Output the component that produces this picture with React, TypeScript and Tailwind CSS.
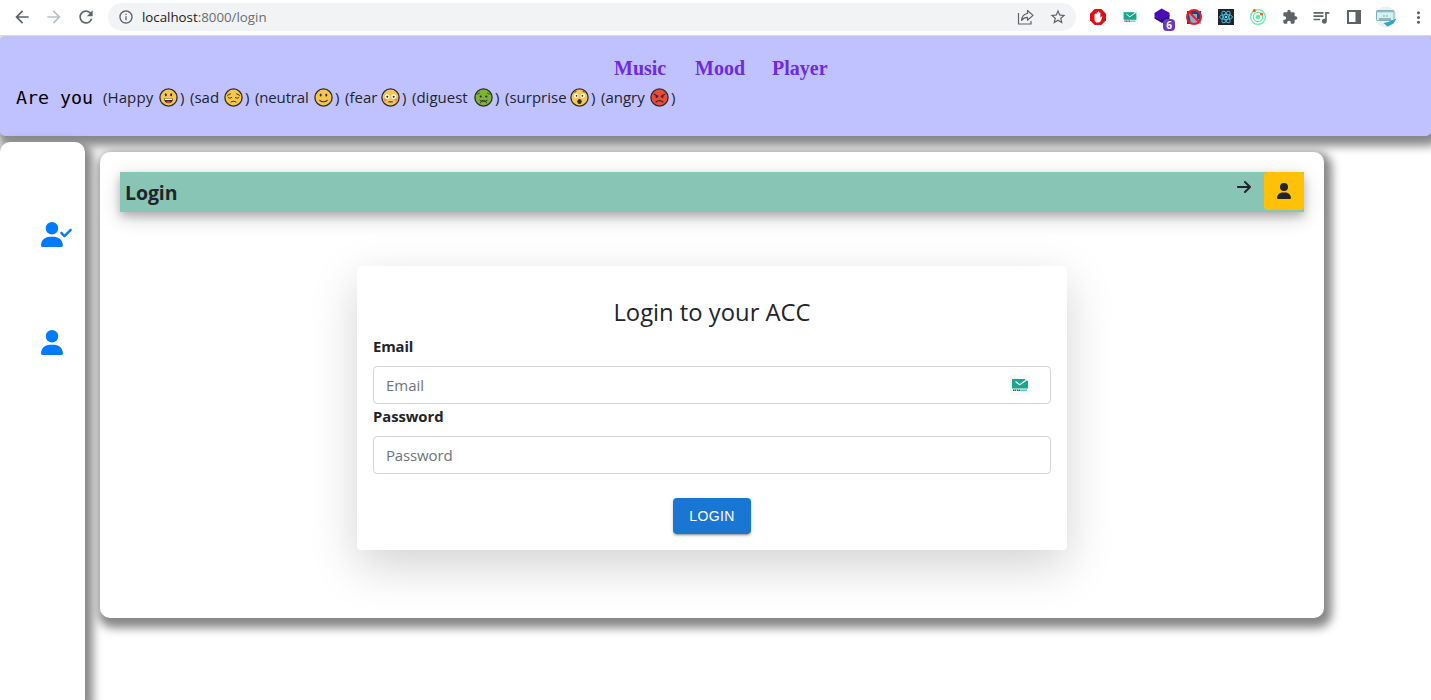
import React from "react";
import { FaArrowRight, FaUser, FaUserCheck } from "react-icons/fa6";
import {
  MdArrowBack,
  MdArrowForward,
  MdExtension,
  MdInfoOutline,
  MdMoreVert,
  MdOutlineQueueMusic,
  MdRefresh,
  MdStarBorder,
} from "react-icons/md";

type Mood = "happy" | "sad" | "neutral" | "fear" | "disgust" | "surprise" | "angry";

const fills: Record<Mood, string> = {
  happy: "#f7c548",
  sad: "#f7c548",
  neutral: "#f7c548",
  fear: "#f9c555",
  disgust: "#7db52c",
  surprise: "#f9c84f",
  angry: "#e94b35",
};

function Face({ mood }: { mood: Mood }) {
  const ink = "#2f2a2c";
  return (
    <svg viewBox="0 0 19 19" className="-ml-px mr-px h-[19px] w-[19px] shrink-0">
      <circle cx="9.5" cy="9.5" r="8.6" fill={fills[mood]} stroke={ink} strokeWidth="1.3" />
      {mood === "happy" && (
        <>
          <ellipse cx="6.8" cy="6.7" rx="1" ry="1.5" fill={ink} />
          <ellipse cx="12.2" cy="6.7" rx="1" ry="1.5" fill={ink} />
          <path d="M5 10.5h9c0 3-2 4.8-4.5 4.8S5 13.500 5 10.500z" fill={ink} />
          <path d="M5.700 10.700h7.600v1.300H5.700z" fill="#fff" />
          <ellipse cx="9.500" cy="14" rx="2.300" ry="1" fill="#e8403a" />
        </>
      )}
      {mood === "sad" && (
        <g fill="none" stroke={ink} strokeWidth=".9" strokeLinecap="round">
          <path d="M3.500 7.300 6.500 5.800M15.500 7.300 12.500 5.800M4 9.300c1 1.200 2.700 1.200 3.700.2M15 9.300c-1 1.200-2.700 1.200-3.700.2M7 14c1.500-1 3.500-1 5 0" />
        </g>
      )}
      {mood === "neutral" && (
        <>
          <ellipse cx="6.700" cy="7" rx="1" ry="1.500" fill={ink} />
          <ellipse cx="12.300" cy="7" rx="1" ry="1.500" fill={ink} />
          <path d="M5.800 12.300c2 2 5.400 2 7.400 0" fill="none" stroke={ink} strokeWidth="1.100" strokeLinecap="round" />
        </>
      )}
      {mood === "fear" && (
        <>
          <circle cx="3.900" cy="11.800" r="1.600" fill="#f58b5a" />
          <circle cx="15.100" cy="11.800" r="1.600" fill="#f58b5a" />
          <circle cx="6.200" cy="8.700" r="2.400" fill="#fff" />
          <circle cx="12.800" cy="8.700" r="2.400" fill="#fff" />
          <circle cx="6.300" cy="8.800" r="1" fill={ink} />
          <circle cx="12.700" cy="8.800" r="1" fill={ink} />
          <path d="M7.600 13.900h3.800" stroke={ink} strokeWidth="1" strokeLinecap="round" />
        </>
      )}
      {mood === "disgust" && (
        <>
          <path d="M2.500 6.500 6 5M16.500 6.500 13 5" stroke="#3d7a1c" strokeWidth="1.300" />
          <circle cx="6.700" cy="8.500" r="1.100" fill={ink} />
          <circle cx="12.300" cy="8.500" r="1.100" fill={ink} />
          <path d="M6.500 15.200c.3-2 1.500-2.700 3-2.700s2.700.7 3 2.700M5.500 12l2.200 1.200h3.600l2.200-1.200" fill="none" stroke={ink} strokeWidth=".9" />
        </>
      )}
      {mood === "surprise" && (
        <>
          <path d="M4.500 4.300 6.500 3.300M14.500 4.300l-2-1" stroke={ink} strokeWidth=".8" />
          <circle cx="6.300" cy="7.700" r="2.200" fill="#fff" />
          <circle cx="12.700" cy="7.700" r="2.200" fill="#fff" />
          <circle cx="6.600" cy="7.800" r=".9" fill={ink} />
          <circle cx="12.400" cy="7.800" r=".9" fill={ink} />
          <ellipse cx="9.500" cy="13.400" rx="2.200" ry="2.500" fill={ink} />
        </>
      )}
      {mood === "angry" && (
        <>
          <path d="M4.300 6.300 7.800 8.300M14.700 6.300l-3.500 2" stroke={ink} strokeWidth="1.200" strokeLinecap="round" />
          <circle cx="6.500" cy="9" r="1.100" fill={ink} />
          <circle cx="12.500" cy="9" r="1.100" fill={ink} />
          <path d="M6 14c1.800-1.600 5.200-1.600 7 0" fill="none" stroke={ink} strokeWidth="1.100" strokeLinecap="round" />
        </>
      )}
    </svg>
  );
}

function MailBadge({ className }: { className: string }) {
  return (
    <svg viewBox="0 0 20 20" className={className}>
      <path d="M0 0h20v20H0z" fill="#f8f9f9" />
      <path d="M2 4h16v9.500H2z" fill="#1ba58d" />
      <path d="M14.500 4H18v2z" fill="#fff" />
      <path d="M5.500 6.500 9.700 9.700 16.500 5" fill="none" stroke="#fff" strokeWidth="1.200" />
      <path d="M3 15.200h7.500" stroke="#35524f" strokeWidth="1.500" strokeDasharray="1.500 .4" />
      <path d="M10.500 15.200H17" stroke="#45d3b8" strokeWidth="1.500" />
    </svg>
  );
}

const moods: { label: string; mood: Mood; item: string; text: string }[] = [
  { label: "(Happy", mood: "happy", item: "w-[87px]", text: "w-[57px] tracking-[0.1px]" },
  { label: "(sad", mood: "sad", item: "w-[65px]", text: "w-[35px]" },
  { label: "(neutral", mood: "neutral", item: "w-[90px]", text: "w-[60px] tracking-[-0.15px]" },
  { label: "(fear", mood: "fear", item: "w-[67px]", text: "w-[37px]" },
  { label: "(diguest", mood: "disgust", item: "w-[93px]", text: "w-[63px]" },
  { label: "(surprise", mood: "surprise", item: "w-[96px]", text: "w-[66px]" },
  { label: "(angry", mood: "angry", item: "w-[80px]", text: "w-[50px]" },
];

function BrowserBar() {
  return (
    <div className="relative z-10 flex h-9 shrink-0 items-center border-b border-[#d6d8e2] bg-white pb-px text-[#5f6368]">
      <MdArrowBack className="ml-3 h-5 w-5" />
      <MdArrowForward className="ml-3 h-5 w-5 text-[#bdc0c3]" />
      <MdRefresh className="ml-3 h-5 w-5" />
      <div className="ml-3 flex h-7 w-[968px] items-center rounded-full bg-[#f1f3f4] pl-2.5">
        <MdInfoOutline className="h-4 w-4" />
        <span className="ml-2 w-[200px] text-[13.300px] leading-7 text-[#6a6e72]">
          <span className="text-[#202124]">localhost</span>:8000/login
        </span>
        <svg viewBox="0 0 18 18" className="ml-auto h-[18px] w-[18px]" fill="none" stroke="currentColor" strokeWidth="1.200">
          <path d="M1.500 5v11h12.500v-3" />
          <path d="M10.500 2.500v3C7 6 4.900 8.200 4.600 12.400c1.500-2.200 3.400-3 5.900-3v2.900L16 7.400z" strokeLinejoin="round" />
        </svg>
        <MdStarBorder className="ml-[14px] mr-[9px] h-[18px] w-[18px]" />
      </div>
      <svg viewBox="0 0 18 18" className="ml-[13px] h-[18px] w-[18px]">
        <path d="M5.700 1h6.600L17 5.700v6.600L12.300 17H5.700L1 12.300V5.700z" fill="#e50b13" />
        <path d="M5.500 6.200v5c0 2 1.300 3.400 3.200 3.400 2 0 2.900-1 3.500-2.700l1.200-3.200c-.9-.5-1.500 0-2 1.300V4.700c-.6-.6-1-.4-1.200.2V3.700c-.5-.6-1-.5-1.300 0v1c-.5-.6-1-.4-1.300.1v1.300c-.7-.7-1.600-.7-2.100.1z" fill="#fff" />
      </svg>
      <MailBadge className="ml-[15px] h-4 w-4" />
      <div className="relative ml-[15px] h-5 w-[18px]">
        <svg viewBox="0 0 18 20" className="h-5 w-[18px]">
          <path d="m8.500 1.500 8 4.200v3L10 14l-8.500-5V6z" fill="#4b0cb5" />
          <path d="m1.500 9 7.500 4 7.500-5v4L9 16l-7.500-4.500z" fill="#300982" />
        </svg>
        <span className="absolute left-[10px] top-3 h-3 w-3 rounded-sm bg-[#6b35c4] text-center text-[10px] font-bold leading-3 text-white">
          6
        </span>
      </div>
      <svg viewBox="0 0 18 18" className="ml-[14px] h-[18px] w-[18px]">
        <path d="M2 3h14v13H2z" fill="#174a7b" />
        <path d="M4 6h8v5l4 1v4H6z" fill="#7fb2d8" />
        <circle cx="9" cy="9" r="7" fill="none" stroke="#ec1c24" strokeWidth="2" />
        <path d="m4 4 10 10" stroke="#ec1c24" strokeWidth="2" />
      </svg>
      <svg viewBox="0 0 16 16" className="ml-[15px] h-4 w-4">
        <path d="M0 0h16v16H0z" fill="#20232a" />
        <g fill="none" stroke="#4fb8dc" strokeWidth="1">
          <ellipse cx="8" cy="8" rx="6.500" ry="2.500" />
          <ellipse cx="8" cy="8" rx="6.500" ry="2.500" transform="rotate(60 8 8)" />
          <ellipse cx="8" cy="8" rx="6.500" ry="2.500" transform="rotate(120 8 8)" />
        </g>
        <circle cx="8" cy="8" r="1.300" fill="#61dafb" />
      </svg>
      <svg viewBox="0 0 18 18" className="ml-[15px] h-[18px] w-[18px]">
        <g fill="none" stroke="#63eba5" strokeWidth="1.200">
          <circle cx="9" cy="9" r="7.400" />
          <circle cx="9" cy="9" r="4.700" />
        </g>
        <circle cx="9" cy="9" r="2.300" fill="#63eba5" />
        <circle cx="5.300" cy="2.700" r="1.600" fill="#f25a2a" />
        <circle cx="12.500" cy="6" r="1.600" fill="#f25a2a" />
      </svg>
      <MdExtension className="ml-[15px] h-4 w-4" />
      <MdOutlineQueueMusic className="ml-[13px] h-5 w-5" />
      <svg viewBox="0 0 14 14" className="ml-4 h-[14px] w-[14px]">
        <path d="M0 0h14v14H0zM2 2v10h6.500V2z" fill="currentColor" fillRule="evenodd" />
      </svg>
      <svg viewBox="0 0 22 22" className="ml-[14px] h-[22px] w-[22px]">
        <circle cx="11" cy="11" r="10.500" fill="#e9f0f3" />
        <rect x="1.500" y="4.500" width="17.500" height="10" rx="1" fill="#d9eef0" stroke="#7fb0ba" />
        <path d="M1.500 5.500h17.500" stroke="#80bec9" strokeWidth="1.500" />
        <path d="M8.500 10h1M11.500 10h1" stroke="#45626c" strokeWidth="1.200" />
        <path d="M4 13h12" stroke="#8b9ca3" strokeWidth="1.500" />
        <path d="m8.500 17 4.500-1 8.500-3.500-3 5-6 3z" fill="#30a6c5" />
      </svg>
      <MdMoreVert className="ml-3 h-[19px] w-[19px] shrink-0" />
    </div>
  );
}

export default function App() {
  return (
    <div className="flex h-[700px] w-full flex-col overflow-hidden bg-white font-['Open_Sans','Noto_Sans',sans-serif] text-[#212529]">
      <BrowserBar />
      <header className="h-[100px] shrink-0 rounded-[5px] bg-[#c0c2ff] px-4 pt-5 shadow-[3px_5px_10px_5px_#888888]">
        <nav className="flex h-6 pl-[598px] font-['Liberation_Serif',serif] text-[20px] font-bold leading-6 text-[#702ae1]">
          <a className="w-[81px]">Music</a>
          <a className="w-[77px]">Mood</a>
          <a>Player</a>
        </nav>
        <div className="flex h-[35px] items-center text-[15px] text-[#212529]">
          <span className="w-[87px] whitespace-pre font-['DejaVu_Sans_Mono',monospace] text-[18.300px] leading-[34px] text-black">
            Are you
          </span>
          {moods.map((m) => (
            <span key={m.mood} className={`flex items-center whitespace-nowrap ${m.item}`}>
              <span className={m.text}>{m.label}</span>
              <Face mood={m.mood} />
              <span className="pl-px">)</span>
            </span>
          ))}
        </div>
      </header>
      <div className="flex min-h-0 flex-1">
        <aside className="mt-1.5 flex w-[85px] shrink-0 flex-col rounded-t-[10px] bg-white pl-[41px] pt-20 text-[#007bff] shadow-[3px_5px_10px_5px_#888888]">
          <FaUserCheck className="h-[25px] w-[31.250px]" />
          <FaUser className="mt-[83px] h-[25px] w-[22px]" />
        </aside>
        <main className="ml-[15px] mt-4 flex h-[466px] w-[1224px] flex-col rounded-[10px] bg-white p-5 shadow-[3px_5px_10px_5px_#888888]">
          <div className="flex h-10 shrink-0 justify-between bg-[#89c5b5] pl-[5px] shadow-[0_4px_8px_0_rgba(0,0,0,0.2),0_6px_20px_0_rgba(0,0,0,0.19)]">
            <h1 className="text-[19.500px] font-bold leading-[42px] tracking-[-0.1px]">Login</h1>
            <div className="flex">
              <FaArrowRight className="mr-[13px] mt-[7px] h-4 w-[14px]" />
              <button className="flex h-[38px] w-10 items-center justify-center rounded bg-[#ffc107]">
                <FaUser className="h-4 w-[14px]" />
              </button>
            </div>
          </div>
          <form className="ml-[237px] mt-[54px] flex h-[284px] w-[710px] shrink-0 flex-col rounded bg-white px-4 shadow-[0_16px_48px_rgba(0,0,0,0.175)]">
            <h2 className="mt-8 text-center text-[23.800px] font-medium leading-[29px]">Login to your ACC</h2>
            <label className="mt-[7px] text-[14.800px] font-bold leading-6 tracking-[-0.1px]">Email</label>
            <div className="mt-2 flex h-[38px] items-center justify-between rounded border border-[#ced4da] pl-3 pr-5 text-[15px] text-[#6c757d]">
              <input className="flex-1 bg-transparent outline-none placeholder:text-[#6c757d]" placeholder="Email" />
              <MailBadge className="h-5 w-5" />
            </div>
            <label className="text-[14.800px] font-bold leading-6 tracking-[-0.05px]">Password</label>
            <div className="mt-2 flex h-[38px] items-center rounded border border-[#ced4da] pl-3 text-[15px]">
              <input type="password" className="flex-1 bg-transparent tracking-[-0.15px] outline-none placeholder:text-[#6c757d]" placeholder="Password" />
            </div>
            <button
              type="button"
              className="mx-auto mt-6 h-9 w-[78px] rounded bg-[#1976d2] font-['Liberation_Sans',sans-serif] text-[14px] font-normal tracking-[0.4px] text-white shadow-[0_3px_1px_-2px_rgba(0,0,0,0.2),0_2px_2px_0_rgba(0,0,0,0.14),0_1px_5px_0_rgba(0,0,0,0.12)]"
            >
              LOGIN
            </button>
          </form>
        </main>
      </div>
    </div>
  );
}
